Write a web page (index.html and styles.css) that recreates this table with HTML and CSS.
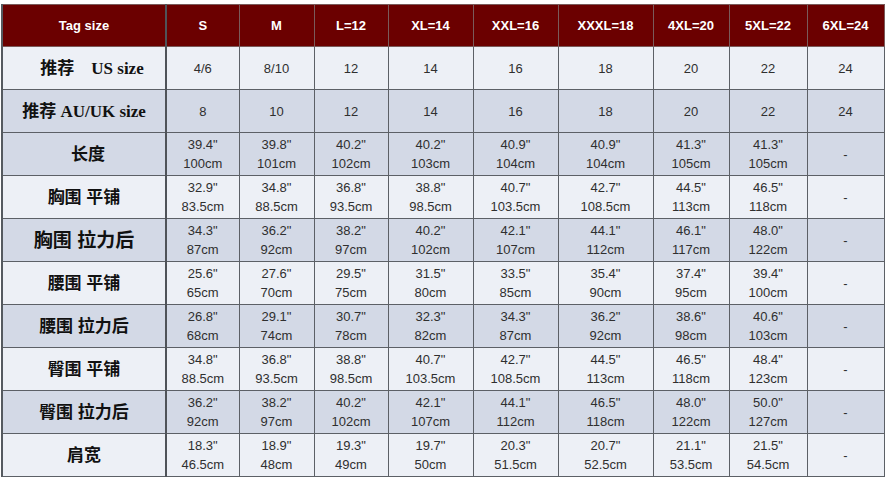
FILE: index.html
```html
<!DOCTYPE html>
<html lang="zh">
<head>
<meta charset="utf-8">
<title>Size chart</title>
<link rel="stylesheet" href="styles.css">
</head>
<body>
<table class="chart">
  <colgroup>
    <col class="c-label">
    <col class="c-s"><col class="c-m"><col class="c-l"><col class="c-xl">
    <col class="c-xxl"><col class="c-xxxl"><col class="c-4xl"><col class="c-5xl"><col class="c-6xl">
  </colgroup>
  <thead>
    <tr class="head">
      <th class="label">Tag size</th><th>S</th><th>M</th><th>L=12</th><th>XL=14</th><th>XXL=16</th><th>XXXL=18</th><th>4XL=20</th><th>5XL=22</th><th>6XL=24</th>
    </tr>
  </thead>
  <tbody>
    <tr class="light">
      <th class="label serif shift">推荐&nbsp;&nbsp;&nbsp;&nbsp;US size</th><td>4/6</td><td>8/10</td><td>12</td><td>14</td><td>16</td><td>18</td><td>20</td><td>22</td><td>24</td>
    </tr>
    <tr class="dark">
      <th class="label serif">推荐 AU/UK size</th><td>8</td><td>10</td><td>12</td><td>14</td><td>16</td><td>18</td><td>20</td><td>22</td><td>24</td>
    </tr>
    <tr class="dark">
      <th class="label nudge">长度</th>
      <td>39.4"<br>100cm</td><td>39.8"<br>101cm</td><td>40.2"<br>102cm</td><td>40.2"<br>103cm</td><td>40.9"<br>104cm</td><td>40.9"<br>104cm</td><td>41.3"<br>105cm</td><td>41.3"<br>105cm</td><td>-</td>
    </tr>
    <tr class="light">
      <th class="label">胸围 平铺</th>
      <td>32.9"<br>83.5cm</td><td>34.8"<br>88.5cm</td><td>36.8"<br>93.5cm</td><td>38.8"<br>98.5cm</td><td>40.7"<br>103.5cm</td><td>42.7"<br>108.5cm</td><td>44.5"<br>113cm</td><td>46.5"<br>118cm</td><td>-</td>
    </tr>
    <tr class="dark">
      <th class="label big">胸围 拉力后</th>
      <td>34.3"<br>87cm</td><td>36.2"<br>92cm</td><td>38.2"<br>97cm</td><td>40.2"<br>102cm</td><td>42.1"<br>107cm</td><td>44.1"<br>112cm</td><td>46.1"<br>117cm</td><td>48.0"<br>122cm</td><td>-</td>
    </tr>
    <tr class="light">
      <th class="label">腰围 平铺</th>
      <td>25.6"<br>65cm</td><td>27.6"<br>70cm</td><td>29.5"<br>75cm</td><td>31.5"<br>80cm</td><td>33.5"<br>85cm</td><td>35.4"<br>90cm</td><td>37.4"<br>95cm</td><td>39.4"<br>100cm</td><td>-</td>
    </tr>
    <tr class="dark">
      <th class="label">腰围 拉力后</th>
      <td>26.8"<br>68cm</td><td>29.1"<br>74cm</td><td>30.7"<br>78cm</td><td>32.3"<br>82cm</td><td>34.3"<br>87cm</td><td>36.2"<br>92cm</td><td>38.6"<br>98cm</td><td>40.6"<br>103cm</td><td>-</td>
    </tr>
    <tr class="light">
      <th class="label">臀围 平铺</th>
      <td>34.8"<br>88.5cm</td><td>36.8"<br>93.5cm</td><td>38.8"<br>98.5cm</td><td>40.7"<br>103.5cm</td><td>42.7"<br>108.5cm</td><td>44.5"<br>113cm</td><td>46.5"<br>118cm</td><td>48.4"<br>123cm</td><td>-</td>
    </tr>
    <tr class="dark">
      <th class="label">臀围 拉力后</th>
      <td>36.2"<br>92cm</td><td>38.2"<br>97cm</td><td>40.2"<br>102cm</td><td>42.1"<br>107cm</td><td>44.1"<br>112cm</td><td>46.5"<br>118cm</td><td>48.0"<br>122cm</td><td>50.0"<br>127cm</td><td>-</td>
    </tr>
    <tr class="light">
      <th class="label">肩宽</th>
      <td>18.3"<br>46.5cm</td><td>18.9"<br>48cm</td><td>19.3"<br>49cm</td><td>19.7"<br>50cm</td><td>20.3"<br>51.5cm</td><td>20.7"<br>52.5cm</td><td>21.1"<br>53.5cm</td><td>21.5"<br>54.5cm</td><td>-</td>
    </tr>
  </tbody>
</table>
</body>
</html>
```

FILE: styles.css
```css
html, body {
  margin: 0;
  padding: 0;
  background: #ffffff;
}

body {
  padding: 4px 0 0 1px;
}

.chart {
  border-collapse: collapse;
  table-layout: fixed;
  width: 882px;
  font-family: "Liberation Sans", Arial, "Noto Sans CJK SC", sans-serif;
  font-size: 13px;
  color: #2f2f2f;
  border-left: 2px solid #555a60;
}

.c-label { width: 164px; }
.c-s { width: 73px; }
.c-m { width: 75px; }
.c-l { width: 74px; }
.c-xl { width: 85px; }
.c-xxl { width: 85px; }
.c-xxxl { width: 95px; }
.c-4xl { width: 76px; }
.c-5xl { width: 78px; }
.c-6xl { width: 77px; }

.chart th,
.chart td {
  border: 1px solid #5c6066;
  text-align: center;
  vertical-align: middle;
  padding: 0;
  line-height: 19px;
}

.chart tr {
  height: 43px;
}

.chart tr.head {
  height: 42px;
}

.head th {
  background: #6b0000;
  color: #ffffff;
  font-weight: bold;
  font-size: 13px;
  border-color: #7a5a5a;
}

.chart .label {
  border-right: 2px solid #4f5359;
  font-family: "Liberation Sans", "Noto Sans CJK SC", sans-serif;
  font-weight: bold;
  font-size: 17px;
  color: #111111;
}

.head .label {
  font-size: 13px;
  color: #ffffff;
}

.chart .label.serif {
  font-family: "Liberation Serif", "Noto Sans CJK SC", serif;
  font-size: 17px;
}

.chart .label.shift {
  padding-left: 16px;
}

.chart .label.nudge {
  padding-left: 8px;
}

.chart .label.big {
  font-size: 19px;
}

.light th,
.light td {
  background: #edf0f6;
}

.dark th,
.dark td {
  background: #d3d9e6;
}
```
